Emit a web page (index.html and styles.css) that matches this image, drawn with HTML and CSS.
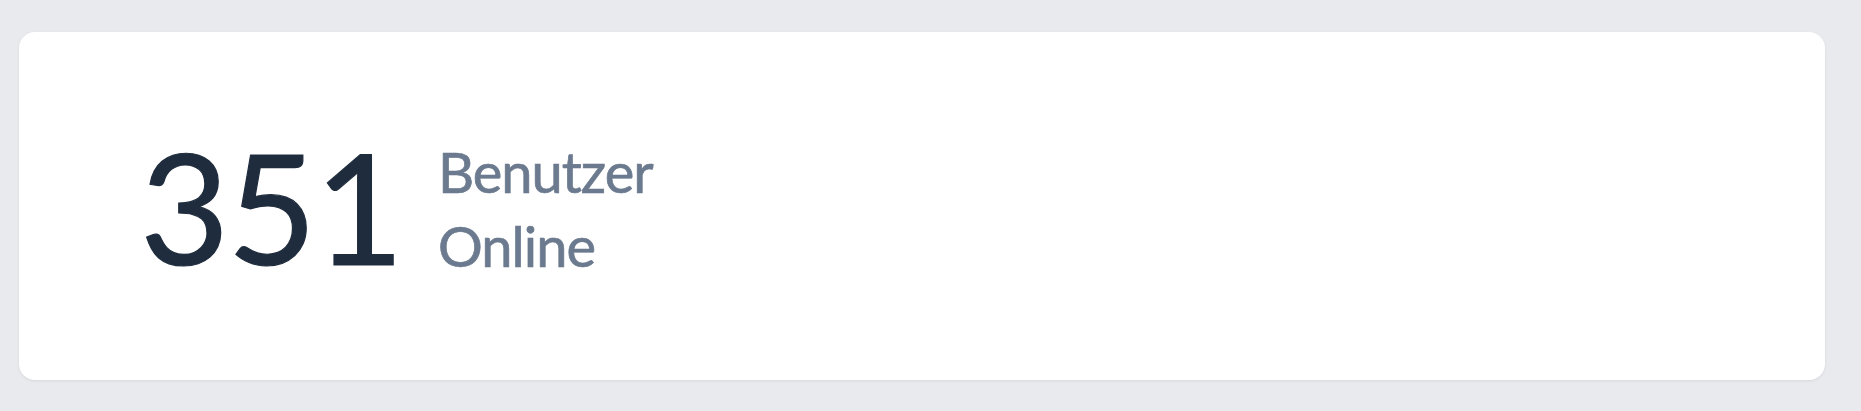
FILE: index.html
```html
<!DOCTYPE html>
<html lang="de">
<head>
  <meta charset="UTF-8" />
  <meta name="viewport" content="width=device-width, initial-scale=1.0"/>
  <title>Benutzer Online</title>
  <link rel="stylesheet" href="styles.css">
</head>
<body>
  <div class="page">
    <div class="stat-card">
      <div class="stat">
        <span class="stat-value">351</span>
        <span class="stat-label">Benutzer<br>Online</span>
      </div>
    </div>
  </div>
</body>
</html>
```

FILE: styles.css
```css
:root {
  --page-bg: #e9eaee;
  --card-bg: #ffffff;
  --value-color: #1f2c3d;
  --label-color: #6b7a8e;
}

* {
  box-sizing: border-box;
  margin: 0;
  padding: 0;
}

body {
  font-family: Lato, 'Open Sans', sans-serif;
  background-color: var(--page-bg);
}

.page {
  padding: 32px 36px 31px 19px;
}

.stat-card {
  background-color: var(--card-bg);
  border-radius: 16px;
  box-shadow: 0 1px 3px rgba(0, 0, 0, 0.08);
  height: 348px;
  display: flex;
  align-items: center;
  padding-left: 121px;
}

.stat {
  display: flex;
  align-items: flex-end;
  gap: 36px;
}

.stat-value {
  font-size: 154px;
  line-height: 1;
  letter-spacing: -2px;
  color: var(--value-color);
  -webkit-text-stroke: 1.2px var(--value-color);
}

.stat-label {
  font-size: 56px;
  line-height: 74px;
  letter-spacing: -1px;
  color: var(--label-color);
  -webkit-text-stroke: 0.7px var(--label-color);
}
```
